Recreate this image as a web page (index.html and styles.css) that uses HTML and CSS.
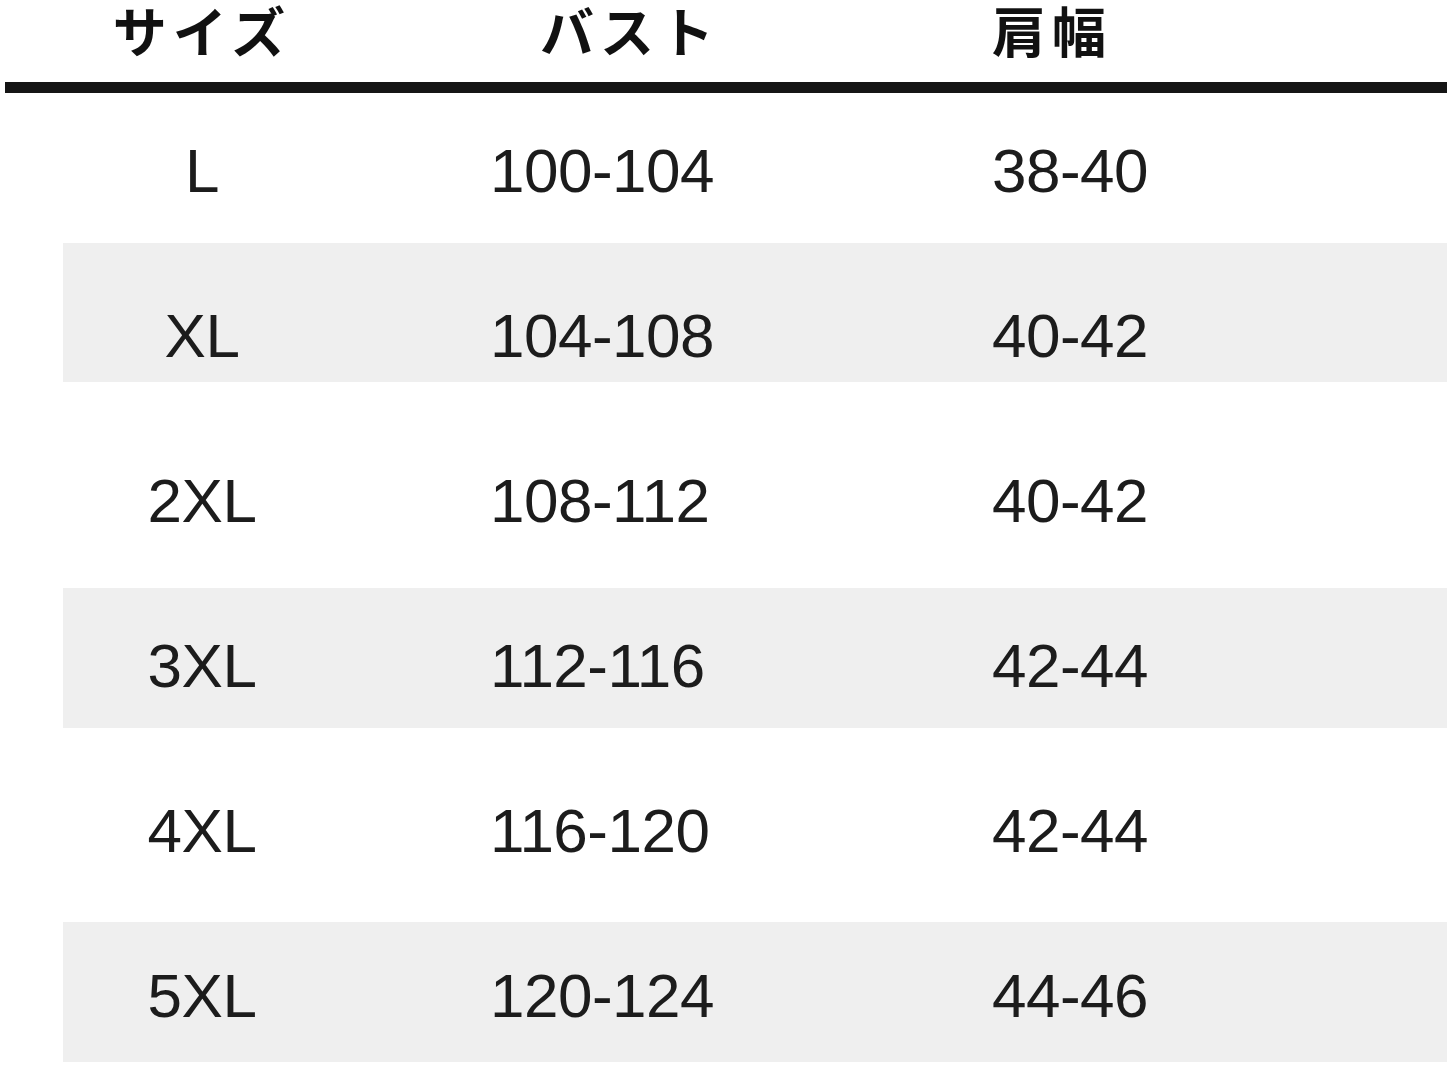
FILE: index.html
```html
<!DOCTYPE html>
<html lang="ja">
<head>
<meta charset="utf-8">
<title>サイズ表</title>
<link rel="stylesheet" href="styles.css">
</head>
<body>
<div class="chart">
  <div class="head">
    <div class="hc c1">サイズ</div>
    <div class="hc c2">バスト</div>
    <div class="hc c3">肩幅</div>
  </div>
  <div class="rule"></div>
  <div class="row r1">
    <div class="cell c1">L</div>
    <div class="cell c2">100-104</div>
    <div class="cell c3">38-40</div>
  </div>
  <div class="row r2 shade">
    <div class="cell c1">XL</div>
    <div class="cell c2">104-108</div>
    <div class="cell c3">40-42</div>
  </div>
  <div class="row r3">
    <div class="cell c1">2XL</div>
    <div class="cell c2">108-112</div>
    <div class="cell c3">40-42</div>
  </div>
  <div class="row r4 shade">
    <div class="cell c1">3XL</div>
    <div class="cell c2">112-116</div>
    <div class="cell c3">42-44</div>
  </div>
  <div class="row r5">
    <div class="cell c1">4XL</div>
    <div class="cell c2">116-120</div>
    <div class="cell c3">42-44</div>
  </div>
  <div class="row r6 shade">
    <div class="cell c1">5XL</div>
    <div class="cell c2">120-124</div>
    <div class="cell c3">44-46</div>
  </div>
</div>
</body>
</html>
```

FILE: styles.css
```css
html, body {
  margin: 0;
  padding: 0;
  background: #ffffff;
}

.chart {
  width: 1452px;
  height: 1065px;
  overflow: hidden;
}

.head {
  display: grid;
  grid-template-columns: 388px 599px 1fr;
  margin: 0 5px;
  height: 82px;
  font-family: "Liberation Sans", "Noto Sans CJK JP", sans-serif;
  font-weight: 700;
  font-size: 54px;
  letter-spacing: 6px;
  line-height: 68px;
  color: #111111;
}

.head .c1 {
  text-align: center;
  padding-left: 6px;
}

.head .c2 {
  padding-left: 147px;
}

.rule {
  height: 11px;
  margin: 0 5px;
  background: #151515;
}

.row {
  display: grid;
  grid-template-columns: 278px 651px 1fr;
  margin: 0 5px 0 63px;
  box-sizing: border-box;
  font-family: "Liberation Sans", Arial, sans-serif;
  font-size: 62px;
  line-height: 64px;
  color: #1c1c1c;
  letter-spacing: -0.5px;
}

.shade {
  background: #efefef;
}

.cell.c1 {
  text-align: center;
}

.cell.c2 {
  padding-left: 149px;
}

.r1 { height: 150px; padding-top: 46px; }
.r2 { height: 139px; padding-top: 61px; }
.r3 { height: 206px; padding-top: 87px; }
.r4 { height: 140px; padding-top: 46px; }
.r5 { height: 194px; padding-top: 71px; }
.r6 { height: 140px; padding-top: 42px; }
```
